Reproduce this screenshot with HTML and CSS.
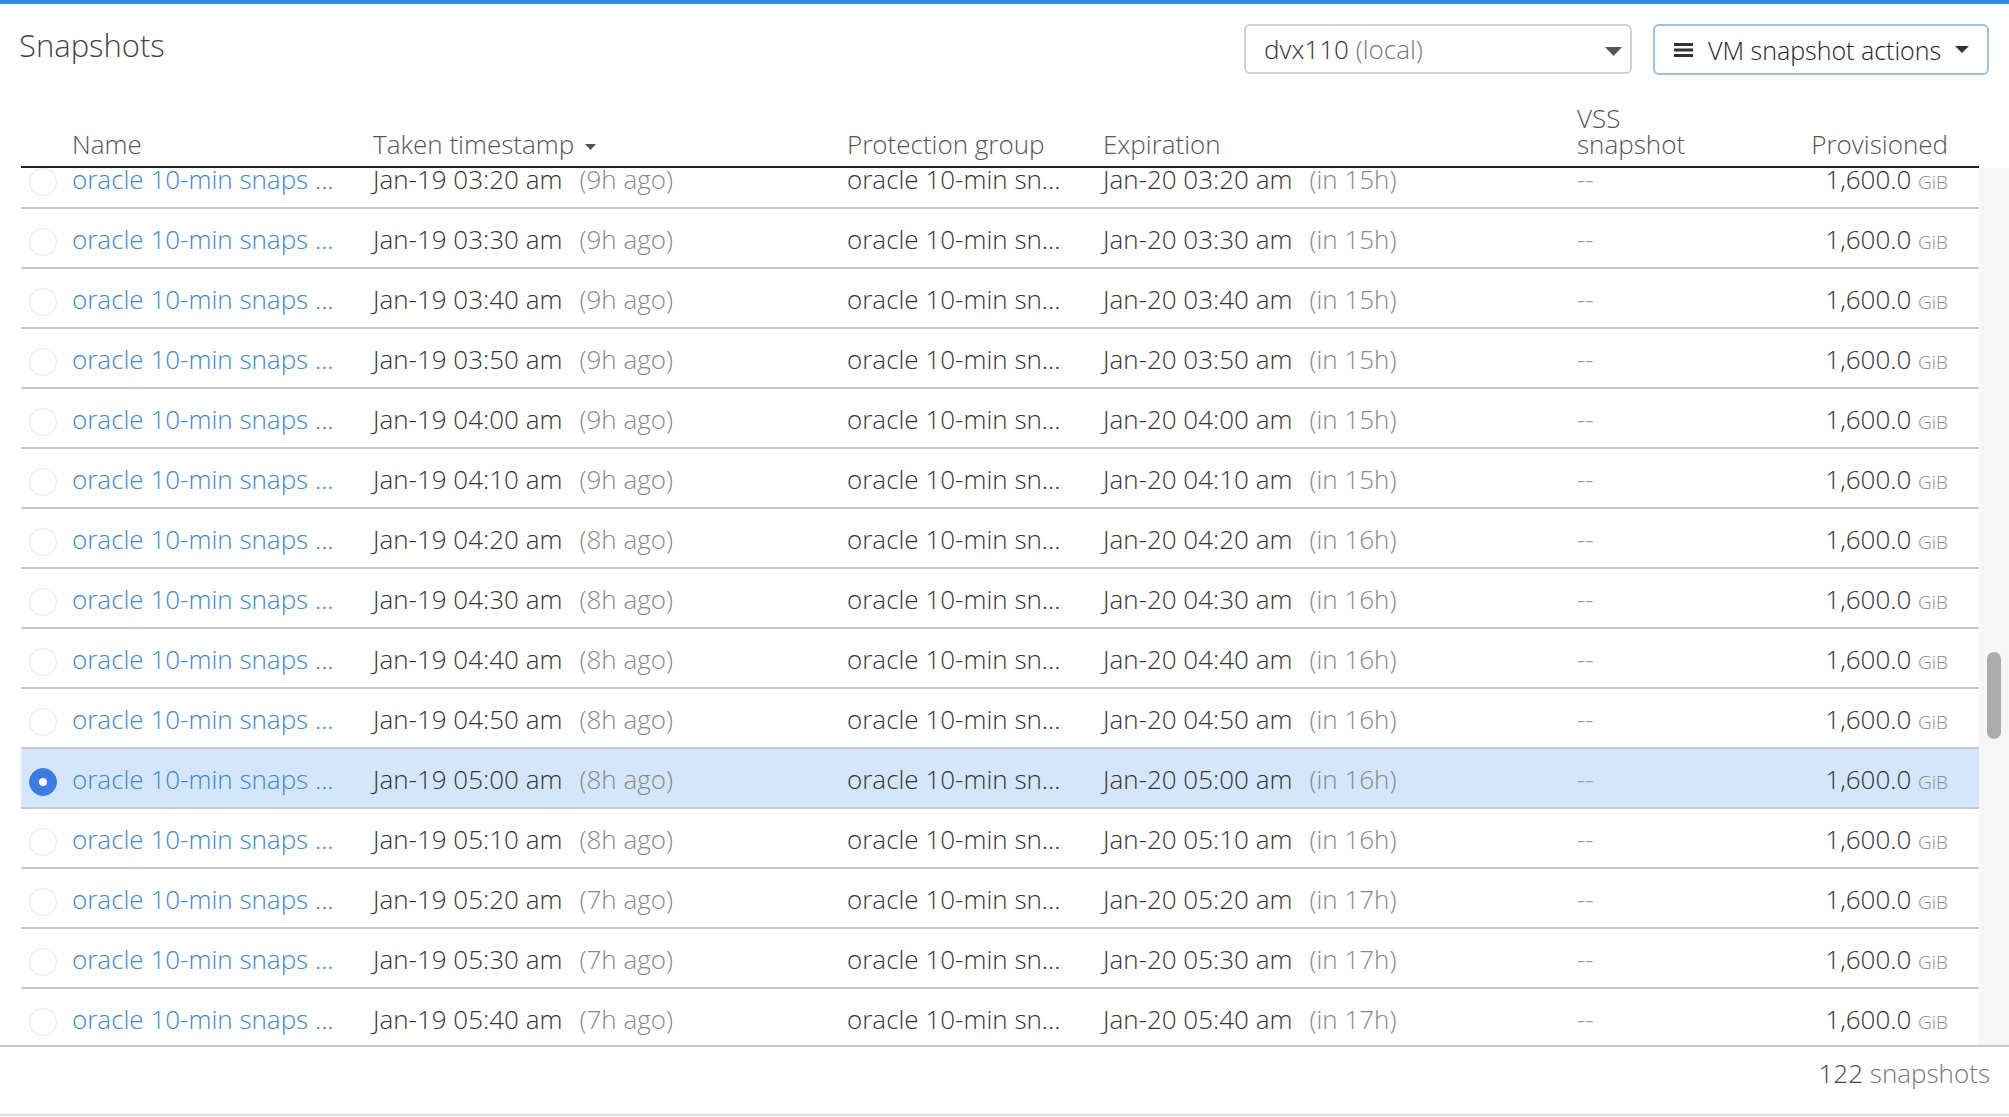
FILE: index.html
```html
<!DOCTYPE html>
<html lang="en">
<head>
    <meta charset="UTF-8">
    <meta name="viewport" content="width=device-width, initial-scale=1.0">
    <title>Snapshots</title>
    <link rel="stylesheet" href="styles.css">
</head>
<body>
    <div class="top-bar"></div>

    <div class="page-head">
        <h1 class="page-title">Snapshots</h1>
        <div class="controls">
            <div class="select">
                <span>dvx110 <span class="muted">(local)</span></span>
                <svg class="select-caret" width="17" height="9" viewBox="0 0 17 9"><polygon points="0,0 17,0 8.5,9" fill="#555"/></svg>
            </div>
            <button class="actions-btn" type="button">
                <svg class="burger" width="19" height="14" viewBox="0 0 19 14">
                    <rect x="0" y="0" width="19" height="3" fill="#333"/>
                    <rect x="0" y="5.5" width="19" height="3" fill="#333"/>
                    <rect x="0" y="11" width="19" height="3" fill="#333"/>
                </svg>
                <span class="btn-label">VM snapshot actions</span>
                <svg class="btn-caret" width="14" height="7" viewBox="0 0 14 7"><polygon points="0,0 14,0 7,7" fill="#333"/></svg>
            </button>
        </div>
    </div>

    <div class="grid-head">
        <div></div>
        <div>Name</div>
        <div>Taken timestamp <svg class="sort-caret" width="11" height="6" viewBox="0 0 11 6"><polygon points="0,0 11,0 5.5,6" fill="#555"/></svg></div>
        <div>Protection group</div>
        <div>Expiration</div>
        <div>VSS<br>snapshot</div>
        <div class="num">Provisioned</div>
    </div>

    <div class="body-wrap">
        <div class="rows">
            <div class="row"><div><span class="radio"></span></div><div class="link">oracle 10-min snaps ...</div><div>Jan-19 03:20 am<span class="ago">(9h ago)</span></div><div>oracle 10-min sn...</div><div>Jan-20 03:20 am<span class="ago">(in 15h)</span></div><div class="dash">--</div><div class="num">1,600.0 <span class="unit">GiB</span></div></div>
            <div class="row"><div><span class="radio"></span></div><div class="link">oracle 10-min snaps ...</div><div>Jan-19 03:30 am<span class="ago">(9h ago)</span></div><div>oracle 10-min sn...</div><div>Jan-20 03:30 am<span class="ago">(in 15h)</span></div><div class="dash">--</div><div class="num">1,600.0 <span class="unit">GiB</span></div></div>
            <div class="row"><div><span class="radio"></span></div><div class="link">oracle 10-min snaps ...</div><div>Jan-19 03:40 am<span class="ago">(9h ago)</span></div><div>oracle 10-min sn...</div><div>Jan-20 03:40 am<span class="ago">(in 15h)</span></div><div class="dash">--</div><div class="num">1,600.0 <span class="unit">GiB</span></div></div>
            <div class="row"><div><span class="radio"></span></div><div class="link">oracle 10-min snaps ...</div><div>Jan-19 03:50 am<span class="ago">(9h ago)</span></div><div>oracle 10-min sn...</div><div>Jan-20 03:50 am<span class="ago">(in 15h)</span></div><div class="dash">--</div><div class="num">1,600.0 <span class="unit">GiB</span></div></div>
            <div class="row"><div><span class="radio"></span></div><div class="link">oracle 10-min snaps ...</div><div>Jan-19 04:00 am<span class="ago">(9h ago)</span></div><div>oracle 10-min sn...</div><div>Jan-20 04:00 am<span class="ago">(in 15h)</span></div><div class="dash">--</div><div class="num">1,600.0 <span class="unit">GiB</span></div></div>
            <div class="row"><div><span class="radio"></span></div><div class="link">oracle 10-min snaps ...</div><div>Jan-19 04:10 am<span class="ago">(9h ago)</span></div><div>oracle 10-min sn...</div><div>Jan-20 04:10 am<span class="ago">(in 15h)</span></div><div class="dash">--</div><div class="num">1,600.0 <span class="unit">GiB</span></div></div>
            <div class="row"><div><span class="radio"></span></div><div class="link">oracle 10-min snaps ...</div><div>Jan-19 04:20 am<span class="ago">(8h ago)</span></div><div>oracle 10-min sn...</div><div>Jan-20 04:20 am<span class="ago">(in 16h)</span></div><div class="dash">--</div><div class="num">1,600.0 <span class="unit">GiB</span></div></div>
            <div class="row"><div><span class="radio"></span></div><div class="link">oracle 10-min snaps ...</div><div>Jan-19 04:30 am<span class="ago">(8h ago)</span></div><div>oracle 10-min sn...</div><div>Jan-20 04:30 am<span class="ago">(in 16h)</span></div><div class="dash">--</div><div class="num">1,600.0 <span class="unit">GiB</span></div></div>
            <div class="row"><div><span class="radio"></span></div><div class="link">oracle 10-min snaps ...</div><div>Jan-19 04:40 am<span class="ago">(8h ago)</span></div><div>oracle 10-min sn...</div><div>Jan-20 04:40 am<span class="ago">(in 16h)</span></div><div class="dash">--</div><div class="num">1,600.0 <span class="unit">GiB</span></div></div>
            <div class="row"><div><span class="radio"></span></div><div class="link">oracle 10-min snaps ...</div><div>Jan-19 04:50 am<span class="ago">(8h ago)</span></div><div>oracle 10-min sn...</div><div>Jan-20 04:50 am<span class="ago">(in 16h)</span></div><div class="dash">--</div><div class="num">1,600.0 <span class="unit">GiB</span></div></div>
            <div class="row selected"><div><span class="radio checked"></span></div><div class="link">oracle 10-min snaps ...</div><div>Jan-19 05:00 am<span class="ago">(8h ago)</span></div><div>oracle 10-min sn...</div><div>Jan-20 05:00 am<span class="ago">(in 16h)</span></div><div class="dash">--</div><div class="num">1,600.0 <span class="unit">GiB</span></div></div>
            <div class="row"><div><span class="radio"></span></div><div class="link">oracle 10-min snaps ...</div><div>Jan-19 05:10 am<span class="ago">(8h ago)</span></div><div>oracle 10-min sn...</div><div>Jan-20 05:10 am<span class="ago">(in 16h)</span></div><div class="dash">--</div><div class="num">1,600.0 <span class="unit">GiB</span></div></div>
            <div class="row"><div><span class="radio"></span></div><div class="link">oracle 10-min snaps ...</div><div>Jan-19 05:20 am<span class="ago">(7h ago)</span></div><div>oracle 10-min sn...</div><div>Jan-20 05:20 am<span class="ago">(in 17h)</span></div><div class="dash">--</div><div class="num">1,600.0 <span class="unit">GiB</span></div></div>
            <div class="row"><div><span class="radio"></span></div><div class="link">oracle 10-min snaps ...</div><div>Jan-19 05:30 am<span class="ago">(7h ago)</span></div><div>oracle 10-min sn...</div><div>Jan-20 05:30 am<span class="ago">(in 17h)</span></div><div class="dash">--</div><div class="num">1,600.0 <span class="unit">GiB</span></div></div>
            <div class="row"><div><span class="radio"></span></div><div class="link">oracle 10-min snaps ...</div><div>Jan-19 05:40 am<span class="ago">(7h ago)</span></div><div>oracle 10-min sn...</div><div>Jan-20 05:40 am<span class="ago">(in 17h)</span></div><div class="dash">--</div><div class="num">1,600.0 <span class="unit">GiB</span></div></div>
        </div>
        <div class="track"><div class="thumb"></div></div>
    </div>

    <div class="footer"><span class="count">122</span> snapshots</div>
</body>
</html>
```

FILE: styles.css
```css
body {
    margin: 0;
    font-family: 'Open Sans', sans-serif;
    font-weight: 300;
    color: #333;
    background: #fff;
}
.top-bar {
    height: 4px;
    background: #2f8be6;
}
.page-head {
    display: flex;
    align-items: flex-start;
    padding: 20px 20px 0 19px;
}
.page-title {
    flex: 1;
    margin: 3px 0 0;
    font-size: 31px;
    font-weight: 300;
    line-height: 37px;
    color: #444;
}
.controls {
    display: flex;
    gap: 21px;
}
.select {
    box-sizing: border-box;
    width: 388px;
    height: 50px;
    display: flex;
    align-items: center;
    justify-content: space-between;
    padding: 0 8px 0 18px;
    border: 2px solid #d2d2d2;
    border-radius: 6px;
    font-size: 26px;
    color: #333;
}
.muted {
    color: #777;
}
.select-caret {
    margin-top: 4px;
}
.actions-btn {
    box-sizing: border-box;
    width: 336px;
    height: 51px;
    display: flex;
    align-items: center;
    padding: 0 18px 0 19px;
    border: 2px solid #9dbfe4;
    border-radius: 6px;
    background: #fff;
    font-family: inherit;
    font-weight: 300;
    font-size: 25px;
    color: #222;
}
.burger {
    margin-right: 15px;
}
.btn-label {
    flex: 1;
    text-align: left;
}
.btn-caret {
    margin-left: 10px;
}
.grid-head,
.row {
    display: grid;
    grid-template-columns: 51px 301px 474px 256px 474px 1fr 250px;
}
.grid-head {
    box-sizing: content-box;
    width: 1958px;
    height: 82px;
    margin-left: 21px;
    padding-bottom: 9px;
    align-items: end;
    border-bottom: 2px solid #222;
    font-size: 26px;
    line-height: 26px;
    color: #555;
}
.sort-caret {
    margin-left: 4px;
    vertical-align: middle;
}
.num {
    text-align: right;
    padding-right: 31px;
}
.body-wrap {
    display: flex;
    height: 877px;
}
.rows {
    width: 1958px;
    margin-left: 21px;
    overflow: hidden;
}
.row {
    box-sizing: border-box;
    height: 60px;
    padding-top: 1px;
    align-items: center;
    border-bottom: 2px solid #c9c9c9;
    font-size: 26px;
    white-space: nowrap;
    color: #333;
}
.row:first-child {
    margin-top: -19px;
}
.row.selected {
    background: #d4e6fb;
}
.link {
    color: #3a87d2;
}
.ago {
    margin-left: 17px;
    color: #888;
}
.dash {
    color: #999;
}
.unit {
    font-size: 19px;
    color: #888;
}
.radio {
    display: block;
    box-sizing: border-box;
    width: 28px;
    height: 28px;
    margin: 7px 0 0 8px;
    border: 1px solid #e4e4e4;
    border-radius: 50%;
    background: #fff;
}
.radio.checked {
    display: flex;
    align-items: center;
    justify-content: center;
    border-color: #3a7be6;
    background: #3a7be6;
}
.radio.checked::after {
    content: '';
    width: 8px;
    height: 8px;
    border-radius: 50%;
    background: #fff;
}
.track {
    flex: 1;
    padding-top: 484px;
    background: #f6f6f6;
}
.thumb {
    width: 14px;
    height: 87px;
    margin-left: 8px;
    border-radius: 7px;
    background: #ababab;
}
.footer {
    box-sizing: border-box;
    height: 71px;
    padding: 13px 19px 0 0;
    border-top: 2px solid #c9c9c9;
    border-bottom: 2px solid #dedede;
    text-align: right;
    font-size: 26px;
    line-height: 26px;
    color: #777;
}
.count {
    color: #444;
}
```
